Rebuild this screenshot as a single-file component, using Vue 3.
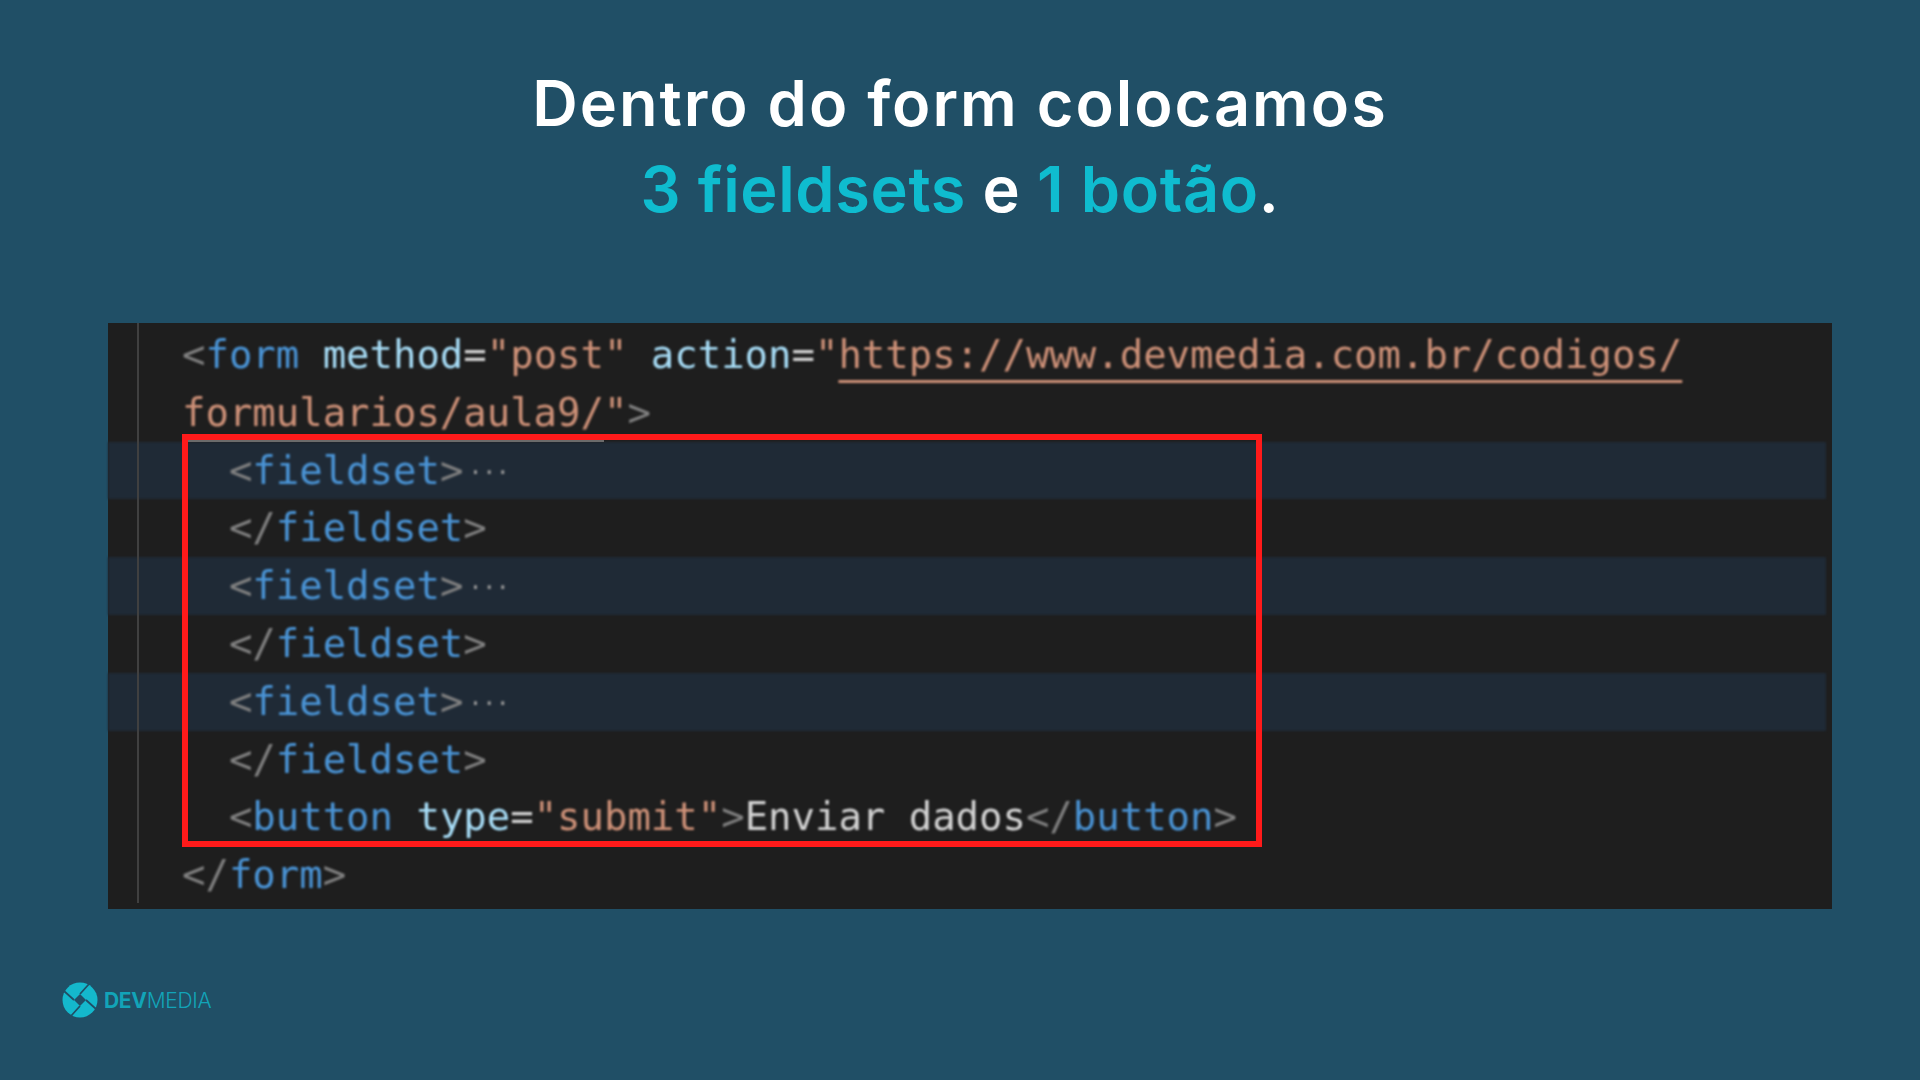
<script setup>
const P = 'p', T = 't', A = 'a', S = 's', X = 'x'
const lines = [
  { parts: [[P, '<'], [T, 'form'], [X, ' '], [A, 'method'], [X, '='], [S, '"post"'], [X, ' '], [A, 'action'], [X, '='], [S, '"'], ['u', 'https://www.devmedia.com.br/codigos/']] },
  { parts: [[S, 'formularios/aula9/"'], [P, '>']] },
  { hl: true, parts: [[X, '  '], [P, '<'], [T, 'fieldset'], [P, '>'], ['e', '···']] },
  { parts: [[X, '  '], [P, '</'], [T, 'fieldset'], [P, '>']] },
  { hl: true, parts: [[X, '  '], [P, '<'], [T, 'fieldset'], [P, '>'], ['e', '···']] },
  { parts: [[X, '  '], [P, '</'], [T, 'fieldset'], [P, '>']] },
  { hl: true, parts: [[X, '  '], [P, '<'], [T, 'fieldset'], [P, '>'], ['e', '···']] },
  { parts: [[X, '  '], [P, '</'], [T, 'fieldset'], [P, '>']] },
  { parts: [[X, '  '], [P, '<'], [T, 'button'], [X, ' '], [A, 'type'], [X, '='], [S, '"submit"'], [P, '>'], [X, 'Enviar dados'], [P, '</'], [T, 'button'], [P, '>']] },
  { parts: [[P, '</'], [T, 'form'], [P, '>']] },
]
</script>

<template>
  <div class="page">
    <h1 class="title">
      <span class="row first">Dentro do form colocamos</span>
      <span class="row second"><em>3 fieldsets</em> e <em>1 botão</em>.</span>
    </h1>

    <div class="panel">
      <div class="code">
        <div v-for="(line, i) in lines" :key="i" class="line" :class="{ hl: line.hl }">
          <span v-for="(part, j) in line.parts" :key="j" :class="part[0]">{{ part[1] }}</span>
        </div>
      </div>
      <i class="guide"></i>
      <i class="fold"></i>
      <i class="redbox"></i>
    </div>

    <div class="logo">
      <svg class="mark" width="36" height="36" viewBox="0 0 36 36" aria-hidden="true">
        <circle cx="18" cy="18" r="17.5" fill="#14b8cc" />
        <path d="M18 12 24 18 18 24 12 18Z" fill="#204f66" />
        <path d="M18 12 27 2M24 18 34 27M18 24 9 34M12 18 2 9" stroke="#204f66" stroke-width="1.8" fill="none" />
      </svg>
      <span class="brand"><b>DEV</b>MEDIA</span>
    </div>
  </div>
</template>

<style>
html, body { margin: 0; background: #204f66; }
</style>

<style scoped>
.page {
  width: 1920px;
  height: 1080px;
  background: #204f66;
  overflow: hidden;
  display: flex;
  flex-direction: column;
  font-family: Inter, "Liberation Sans", sans-serif;
}
.title {
  margin: 60px 0 0;
  height: 263px;
  box-sizing: border-box;
  display: flex;
  flex-direction: column;
  align-items: center;
  font-size: 63px;
  font-weight: 600;
  line-height: 86px;
  color: #fff;
}
.row { display: block; }
.first { letter-spacing: 2px; }
.second { letter-spacing: 0.65px; }
.title em { font-style: normal; color: #0fbccf; }
.panel {
  position: relative;
  margin-left: 108px;
  width: 1724px;
  height: 586px;
  box-sizing: border-box;
  padding: 3px 6px 5px 0;
  background: #1e1e1e;
}
.code {
  filter: blur(0.8px);
  font-family: "DejaVu Sans Mono", "Liberation Mono", monospace;
  font-size: 39px;
  letter-spacing: -0.04px;
  white-space: pre;
}
.line {
  height: 57.8px;
  line-height: 57.8px;
  padding-left: 74px;
  color: #d4d4d4;
}
.line.hl { background: #1f2a36; }
.p { color: #808080; }
.t { color: #4a94d6; }
.a { color: #a8def8; }
.s { color: #ce9178; }
.x { color: #d4d4d4; }
.e {
  margin-left: 5px;
  font-size: 24px;
  letter-spacing: -0.9px;
  vertical-align: 3px;
  color: #9a9a9a;
}
.u {
  color: #ce9178;
  text-decoration: underline;
  text-decoration-thickness: 3px;
  text-decoration-skip-ink: none;
  text-underline-offset: 12px;
}
.guide {
  position: absolute;
  left: 29px;
  top: 0;
  width: 2px;
  height: 580px;
  background: #404040;
}
.fold {
  position: absolute;
  left: 80px;
  top: 117px;
  width: 416px;
  height: 2px;
  background: #6b6b6b;
}
.redbox {
  position: absolute;
  left: 74px;
  top: 111px;
  width: 1080px;
  height: 413px;
  box-sizing: border-box;
  border: 6px solid #ff1a1a;
}
.logo {
  margin: 73px 0 0 62px;
  display: flex;
  align-items: center;
  gap: 6px;
}
.mark { display: block; }
.brand {
  font-size: 21px;
  font-weight: 300;
  letter-spacing: -0.3px;
  color: #12a4b8;
}
.brand b { font-weight: 700; }
</style>
